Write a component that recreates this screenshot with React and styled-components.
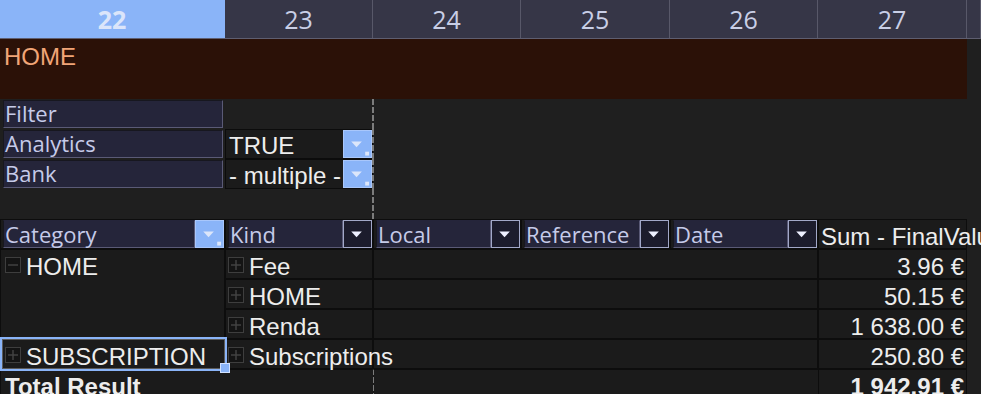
import React from 'react';
import styled, { createGlobalStyle, css } from 'styled-components';

const COLS = '225px 148px 148px 149px 148px 149px 1fr';

const GlobalStyle = createGlobalStyle`
  html, body { margin: 0; padding: 0; background: #1f1f1f; }
  body { overflow: hidden; }
  #root { width: 981px; height: 394px; overflow: hidden; }
`;

const Window = styled.div`
  width: 981px;
  height: 394px;
  overflow: hidden;
  background: #1f1f1f;
`;

const ColumnBar = styled.div`
  display: grid;
  grid-template-columns: ${COLS};
  height: 39px;
  box-sizing: border-box;
  border-bottom: 1px solid #5e5e70;
  background: #363647;
`;

const ColumnHead = styled.div`
  display: flex;
  align-items: center;
  justify-content: center;
  box-sizing: border-box;
  border-right: 1px solid ${p => (p.$selected ? '#8ab4f8' : '#585869')};
  background: ${p => (p.$selected ? '#8ab4f8' : '#363647')};
  color: ${p => (p.$selected ? '#dbe5fa' : '#c9cfe6')};
  font-family: "Open Sans", "Noto Sans", sans-serif;
  font-size: 25px;
  line-height: 30px;
  font-weight: ${p => (p.$selected ? 700 : 400)};
`;

const Sheet = styled.div`
  display: grid;
  grid-template-columns: ${COLS};
  grid-template-rows: 60px;
  grid-auto-rows: 30px;
  font-family: "Liberation Sans", Arial, sans-serif;
  font-size: 24px;
  color: #ededed;
`;

const Empty = styled.div`
  grid-column: span ${p => p.$span || 1};
  min-width: 0;
  ${p =>
    p.$pageBreak &&
    css`
      border-left: 2px dashed #7c7c7c;
      margin-left: -1px;
    `}
`;

const Title = styled.div`
  grid-column: span 6;
  background: #2b1107;
  color: #f1a577;
  padding: 3px 0 0 4px;
  line-height: 30px;
`;

const FieldBox = styled.div`
  display: flex;
  box-sizing: border-box;
  padding: 1px 2px 1px 3px;
  min-width: 0;
`;

const FieldButton = styled.div`
  flex: 1;
  min-width: 0;
  box-sizing: border-box;
  background: #25253a;
  border: 1px solid #5a5a76;
  border-top-color: #17171f;
  border-left-color: #17171f;
  color: #c6cbe9;
  font-family: "Open Sans", "Noto Sans", sans-serif;
  font-size: 22px;
  line-height: 25px;
  padding-left: 1px;
  white-space: nowrap;
`;

const FilterValue = styled.div`
  display: flex;
  box-sizing: border-box;
  border: 1px solid #0c0c0c;
  background: #1b1b1b;
  min-width: 0;
`;

const ValueText = styled.div`
  flex: 1;
  min-width: 0;
  padding: 4px 0 0 3px;
  line-height: 24px;
  white-space: nowrap;
`;

const DropSvg = styled.svg`
  flex: none;
  display: block;
  width: 29px;
  height: 100%;
  box-sizing: border-box;
  background: ${p => (p.$active ? '#8ab4f8' : '#1c1c2c')};
  border: 1px solid ${p => (p.$active ? '#a9c7fb' : '#a2a8c8')};
`;

const DropBtn = ({ active }) => (
  <DropSvg $active={active} viewBox="0 0 27 27" preserveAspectRatio="xMidYMin meet">
    <polygon points="7,11 18,11 12.5,17" fill={active ? '#dce6fa' : '#eef0ff'} />
    {active && <rect x="21.5" y="21.5" width="4" height="4" fill="#dce6fa" />}
  </DropSvg>
);

const PivotCell = styled.div`
  grid-column: span ${p => p.$span || 1};
  grid-row: span ${p => p.$rows || 1};
  position: relative;
  z-index: ${p => (p.$selected ? 3 : p.$overflow ? 2 : 'auto')};
  display: flex;
  align-items: flex-start;
  justify-content: ${p => (p.$right ? 'flex-end' : 'flex-start')};
  gap: 5px;
  box-sizing: border-box;
  min-width: 0;
  border: 1px solid #0d0d0d;
  ${p => p.$noRight && css`border-right-color: transparent;`}
  background: #1b1b1b;
  padding: 5px ${p => (p.$right ? '2px' : '0')} 0 ${p => p.$padLeft || 0}px;
  line-height: 23px;
  white-space: nowrap;
  overflow: visible;
  font-weight: ${p => (p.$bold ? 700 : 400)};
`;

const TotalBlank = styled.div`
  grid-column: span 3;
  box-sizing: border-box;
  border-top: 1px solid #0d0d0d;
  border-left: 2px dashed #7c7c7c;
  margin-left: -1px;
  background: #1b1b1b;
`;

const FieldCell = styled.div`
  display: flex;
  box-sizing: border-box;
  min-width: 0;
  border: 1px solid #0d0d0d;
  background: #1b1b1b;
  padding: 0 0 0 2px;
`;

const HeaderField = styled(FieldButton)`
  line-height: 26px;
  border-top-color: #25253a;
`;

const ExpanderSvg = styled.svg`
  flex: none;
  display: block;
  margin-top: 2px;
`;

const Expander = ({ minus }) => (
  <ExpanderSvg width="16" height="16" viewBox="0 0 16 16">
    <rect x="0.5" y="0.5" width="15" height="15" fill="#141414" stroke="#3e3e3e" />
    <line x1="3" y1="8" x2="13" y2="8" stroke="#444" strokeWidth="1.4" />
    {!minus && <line x1="8" y1="3" x2="8" y2="13" stroke="#444" strokeWidth="1.4" />}
  </ExpanderSvg>
);

const SelectionFrame = styled.div`
  position: absolute;
  left: -1px;
  top: -3px;
  right: -3px;
  bottom: -3px;
  border: 2px solid #8ab4f8;
  box-shadow: inset 0 0 0 1px #5c5c5c;
  pointer-events: none;
`;

const FillHandle = styled.div`
  position: absolute;
  right: -6px;
  bottom: -5px;
  width: 10px;
  height: 10px;
  box-sizing: border-box;
  background: #8ab4f8;
  border: 1px solid #d2e2ff;
`;

const columns = ['22', '23', '24', '25', '26', '27', ''];

const rows = [
  { kind: 'Fee', value: '3.96 €' },
  { kind: 'HOME', value: '50.15 €' },
  { kind: 'Renda', value: '1 638.00 €' },
];

export default function App() {
  return (
    <Window>
      <GlobalStyle />
      <ColumnBar>
        {columns.map((c, i) => (
          <ColumnHead key={i} $selected={i === 0}>{c}</ColumnHead>
        ))}
      </ColumnBar>
      <Sheet>
        <Title>HOME</Title>
        <Empty />

        <FieldBox><FieldButton>Filter</FieldButton></FieldBox>
        <Empty />
        <Empty $span={4} $pageBreak />
        <Empty />

        <FieldBox><FieldButton>Analytics</FieldButton></FieldBox>
        <FilterValue><ValueText>TRUE</ValueText><DropBtn active /></FilterValue>
        <Empty $span={4} $pageBreak />
        <Empty />

        <FieldBox><FieldButton>Bank</FieldButton></FieldBox>
        <FilterValue><ValueText>- multiple -</ValueText><DropBtn active /></FilterValue>
        <Empty $span={4} $pageBreak />
        <Empty />

        <Empty />
        <Empty />
        <Empty $span={4} $pageBreak />
        <Empty />

        <FieldCell><HeaderField>Category</HeaderField><DropBtn active /></FieldCell>
        <FieldCell><HeaderField>Kind</HeaderField><DropBtn /></FieldCell>
        <FieldCell><HeaderField>Local</HeaderField><DropBtn /></FieldCell>
        <FieldCell><HeaderField>Reference</HeaderField><DropBtn /></FieldCell>
        <FieldCell><HeaderField>Date</HeaderField><DropBtn /></FieldCell>
        <PivotCell $overflow $padLeft={2}>Sum - FinalValue</PivotCell>
        <Empty />

        {rows.map((r, i) => (
          <React.Fragment key={r.kind}>
            {i === 0 && (
              <PivotCell $rows={3} $padLeft={4}>
                <Expander minus />HOME
              </PivotCell>
            )}
            <PivotCell $padLeft={2} $overflow><Expander />{r.kind}</PivotCell>
            <PivotCell $span={3} />
            <PivotCell $right>{r.value}</PivotCell>
            <Empty />
          </React.Fragment>
        ))}

        <PivotCell $padLeft={4} $selected>
          <Expander />SUBSCRIPTION
          <SelectionFrame />
          <FillHandle />
        </PivotCell>
        <PivotCell $padLeft={2} $overflow><Expander />Subscriptions</PivotCell>
        <PivotCell $span={3} />
        <PivotCell $right>250.80 €</PivotCell>
        <Empty />

        <PivotCell $span={2} $padLeft={4} $bold $noRight>Total Result</PivotCell>
        <TotalBlank />
        <PivotCell $right $bold>1 942.91 €</PivotCell>
        <Empty />
      </Sheet>
    </Window>
  );
}
